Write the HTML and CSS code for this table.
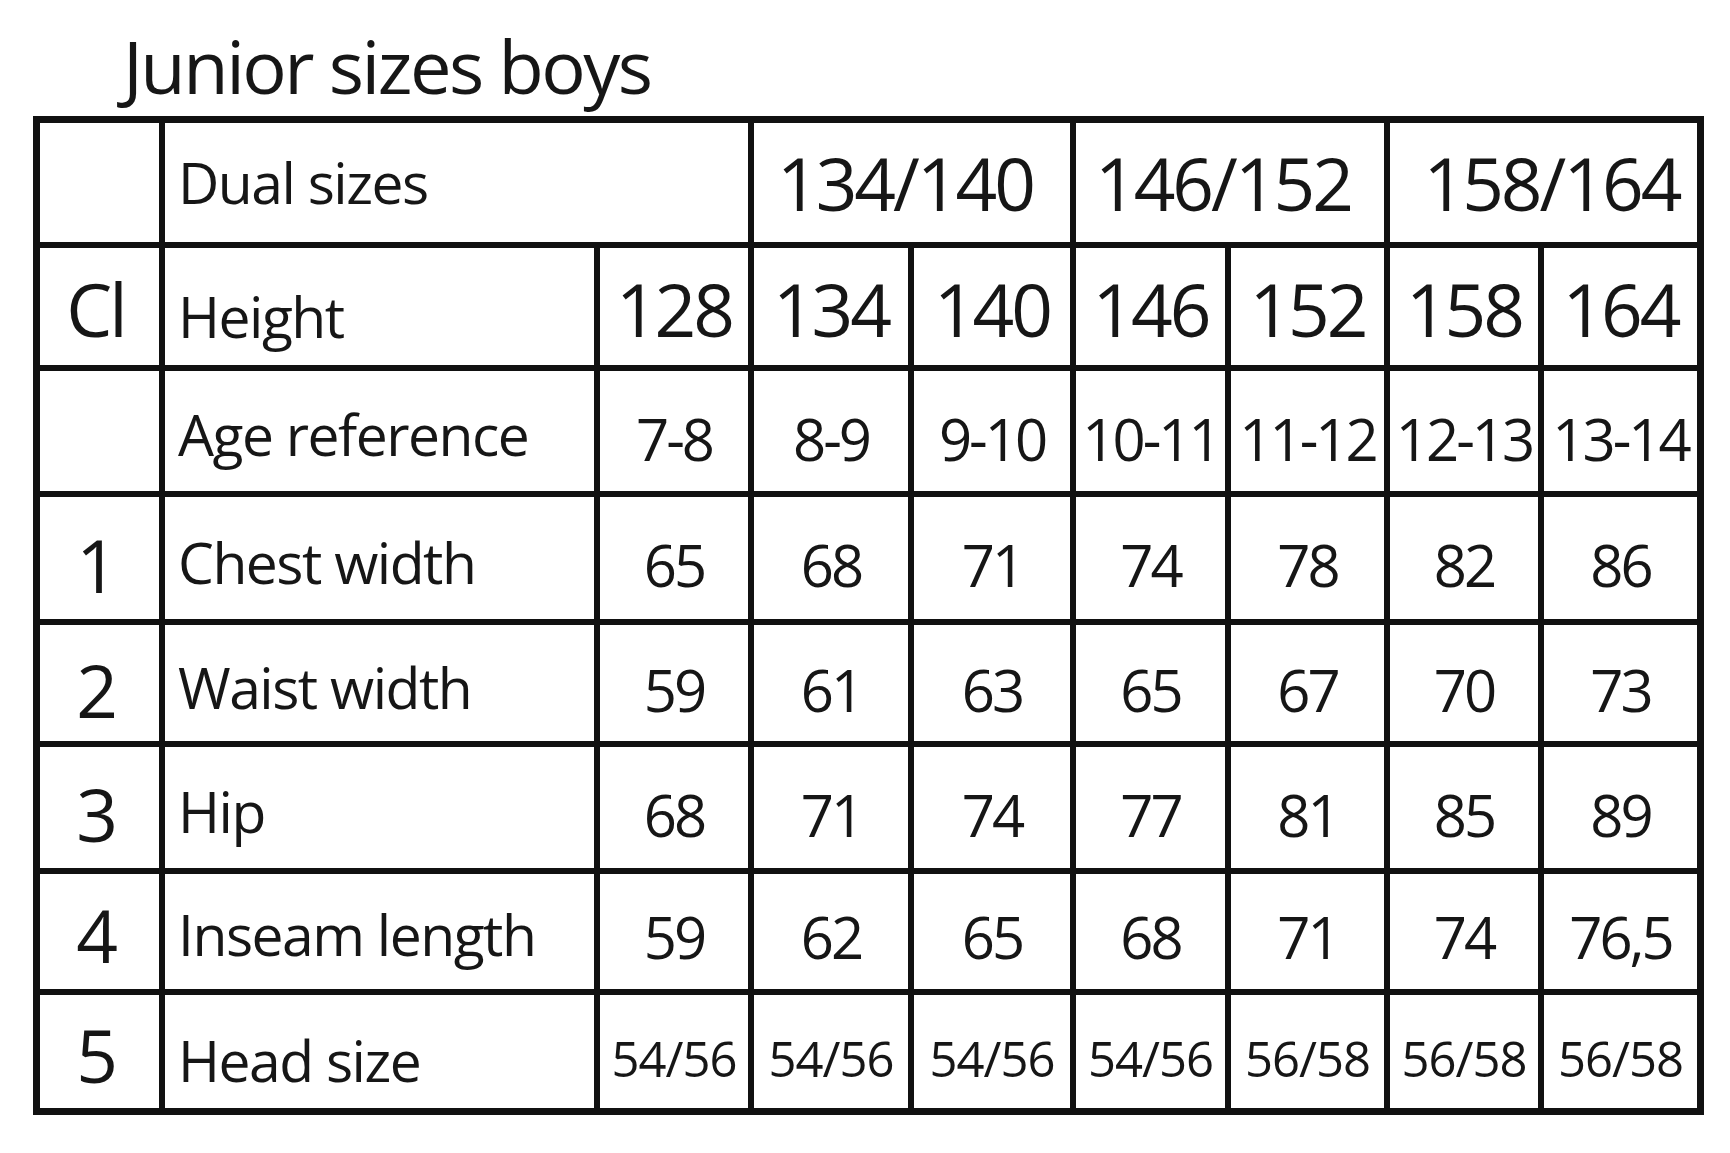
FILE: index.html
```html
<!DOCTYPE html>
<html lang="en">
<head>
<meta charset="utf-8">
<title>Junior sizes boys</title>
<link rel="stylesheet" href="styles.css">
</head>
<body>
<div class="page">
  <h1 class="title">Junior sizes boys</h1>
  <div class="chart">
    <div class="row r1">
      <div class="cell"></div>
      <div class="cell label span2">Dual sizes</div>
      <div class="cell big span2">134/140</div>
      <div class="cell big span2">146/152</div>
      <div class="cell big span2 last">158/164</div>
    </div>
    <div class="row r2">
      <div class="cell big num">Cl</div>
      <div class="cell label">Height</div>
      <div class="cell big">128</div>
      <div class="cell big">134</div>
      <div class="cell big">140</div>
      <div class="cell big">146</div>
      <div class="cell big">152</div>
      <div class="cell big">158</div>
      <div class="cell big">164</div>
    </div>
    <div class="row r3">
      <div class="cell"></div>
      <div class="cell label">Age reference</div>
      <div class="cell val">7-8</div>
      <div class="cell val">8-9</div>
      <div class="cell val">9-10</div>
      <div class="cell val">10-11</div>
      <div class="cell val">11-12</div>
      <div class="cell val">12-13</div>
      <div class="cell val">13-14</div>
    </div>
    <div class="row r4">
      <div class="cell big num">1</div>
      <div class="cell label">Chest width</div>
      <div class="cell val">65</div>
      <div class="cell val">68</div>
      <div class="cell val">71</div>
      <div class="cell val">74</div>
      <div class="cell val">78</div>
      <div class="cell val">82</div>
      <div class="cell val">86</div>
    </div>
    <div class="row r5">
      <div class="cell big num">2</div>
      <div class="cell label">Waist width</div>
      <div class="cell val">59</div>
      <div class="cell val">61</div>
      <div class="cell val">63</div>
      <div class="cell val">65</div>
      <div class="cell val">67</div>
      <div class="cell val">70</div>
      <div class="cell val">73</div>
    </div>
    <div class="row r6">
      <div class="cell big num">3</div>
      <div class="cell label">Hip</div>
      <div class="cell val">68</div>
      <div class="cell val">71</div>
      <div class="cell val">74</div>
      <div class="cell val">77</div>
      <div class="cell val">81</div>
      <div class="cell val">85</div>
      <div class="cell val">89</div>
    </div>
    <div class="row r7">
      <div class="cell big num">4</div>
      <div class="cell label">Inseam length</div>
      <div class="cell val">59</div>
      <div class="cell val">62</div>
      <div class="cell val">65</div>
      <div class="cell val">68</div>
      <div class="cell val">71</div>
      <div class="cell val">74</div>
      <div class="cell val">76,5</div>
    </div>
    <div class="row r8">
      <div class="cell big num">5</div>
      <div class="cell label">Head size</div>
      <div class="cell small">54/56</div>
      <div class="cell small">54/56</div>
      <div class="cell small">54/56</div>
      <div class="cell small">54/56</div>
      <div class="cell small">56/58</div>
      <div class="cell small">56/58</div>
      <div class="cell small">56/58</div>
    </div>
  </div>
</div>
</body>
</html>
```
FILE: styles.css
```css
html, body {
  margin: 0;
  padding: 0;
  background: #ffffff;
}

.page {
  padding: 29px 0 0 33px;
  font-family: "Open Sans", "Noto Sans", sans-serif;
  color: #161616;
}

.title {
  margin: 0 0 13px 90px;
  font-size: 74px;
  font-weight: 400;
  line-height: 74px;
  letter-spacing: -2.5px;
}

.chart {
  display: grid;
  width: max-content;
  grid-template-columns: 119px 429px 148px 154px 156px 149px 153px 148px 153px;
  grid-template-rows: 119px 117px 120px 122px 116px 121px 115px 113px;
  gap: 6px;
  background: #111111;
  border: 7px solid #111111;
}

.row {
  display: contents;
}

.cell {
  display: flex;
  align-items: center;
  justify-content: center;
  background: #ffffff;
  box-sizing: border-box;
  line-height: 1;
  white-space: nowrap;
  overflow: hidden;
}

.span2 {
  grid-column: span 2;
}

.label {
  justify-content: flex-start;
  padding-left: 13px;
  font-size: 57px;
  letter-spacing: -1.5px;
}

.big {
  font-size: 73px;
  letter-spacing: -3px;
}

.r1 .big {
  padding-right: 14px;
}

.r1 .big.last {
  padding-right: 0;
  padding-left: 16px;
}

.val {
  font-size: 58px;
  letter-spacing: -3px;
}

.small {
  font-size: 49px;
  letter-spacing: -1px;
}

.num {
  padding-right: 8px;
}

/* vertical fine-tuning per row */
.r2 .big { padding-top: 3px; }
.r2 .label { padding-top: 19px; }
.r3 .label { padding-top: 6px; }
.r3 .val { padding-top: 16px; }
.r4 .label, .r5 .label, .r6 .label { padding-top: 8px; }
.r4 .val, .r5 .val, .r6 .val { padding-top: 14px; }
.r4 .num, .r5 .num, .r6 .num { padding-top: 12px; }
.r7 .label { padding-top: 5px; }
.r7 .val { padding-top: 10px; }
.r7 .num { padding-top: 6px; }
.r8 .label { padding-top: 17px; }
.r8 .small { padding-top: 13px; }
.r8 .num { padding-top: 6px; }
```
